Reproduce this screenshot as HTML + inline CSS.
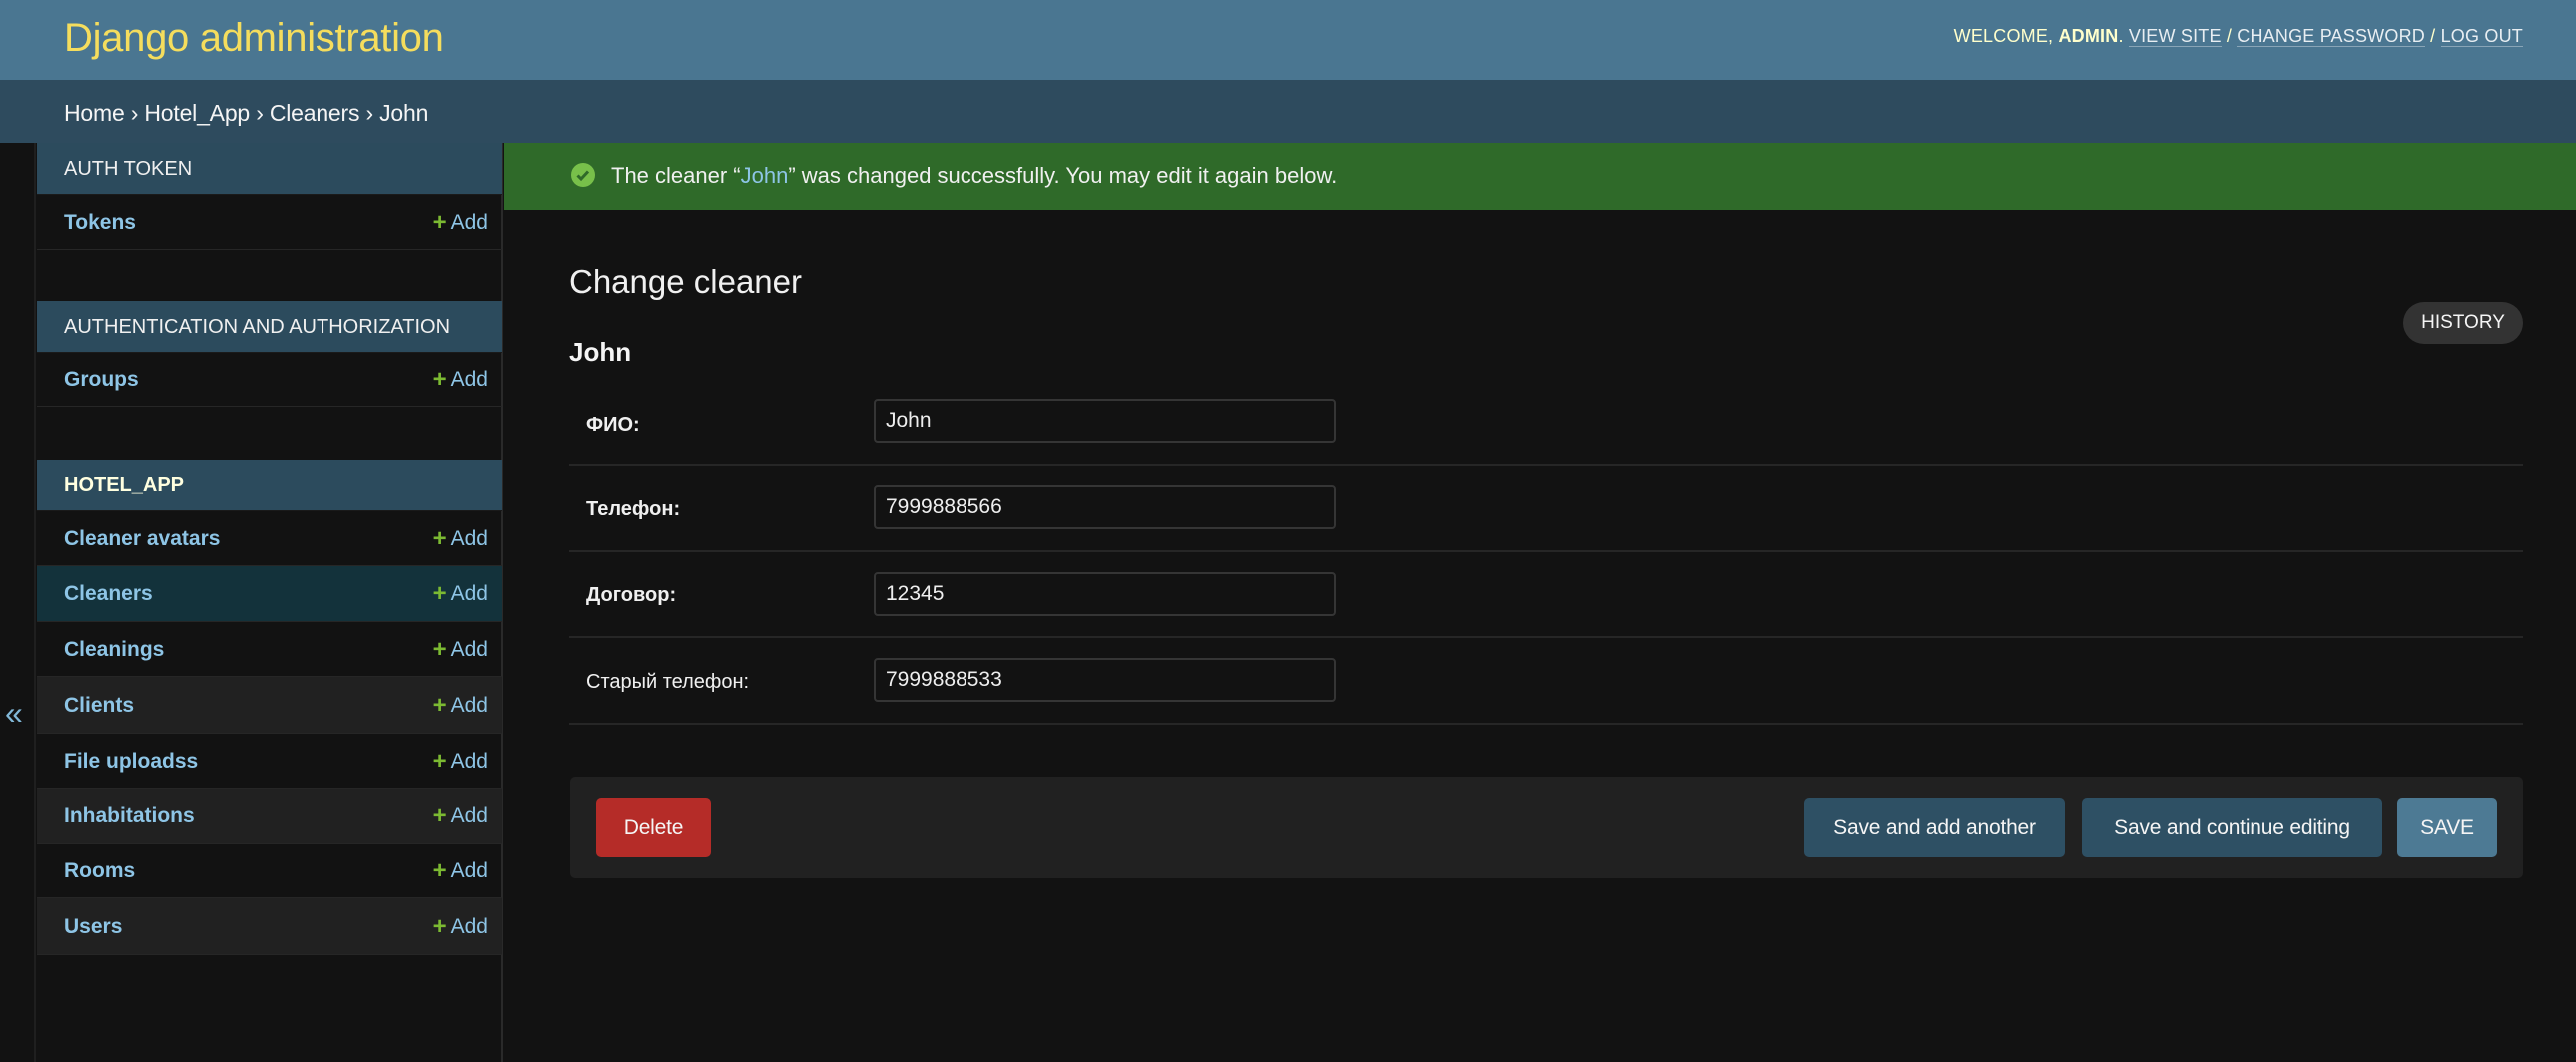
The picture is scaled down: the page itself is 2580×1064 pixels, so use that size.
<!DOCTYPE html>
<html><head><meta charset="utf-8"><style>
*{margin:0;padding:0;box-sizing:border-box}
body{width:2580px;height:1064px;background:#121212;font-family:"Liberation Sans",Arial,sans-serif;color:#eee;position:relative;overflow:hidden}
.a{position:absolute}
#hdr{left:0;top:0;width:2580px;height:80px;background:#4a7691}
#hdr h1{position:absolute;left:64px;top:16px;font-size:40px;color:#f5dd5d;font-weight:normal;letter-spacing:-0.3px}
#tools{right:53px;top:26px;font-size:18px;color:#ffc;text-transform:uppercase;letter-spacing:0.2px}
#tools u{text-decoration:none;border-bottom:1px solid rgba(255,255,255,.35);color:#e8eef2}
#bc{left:0;top:80px;width:2580px;height:63px;background:#2e4b5e;font-size:23px;color:#f5f5f5;padding:20px 0 0 64px;letter-spacing:-0.2px}
#strip{left:0;top:143px;width:36px;height:921px;background:#121212;border-right:2px solid #1f1f1f}
#tog{left:5px;top:696px;font-size:32px;color:#81b8d8}
#side{left:37px;top:143px;width:467px;height:921px;border-right:2px solid #2a2a2a;background:#121212}
.cap{position:absolute;left:0;width:466px;background:#2c4b5d;color:#f0f0f0;font-size:20px;padding-left:27px;border-bottom:1px solid #1a1a1a}
.row{position:absolute;left:0;width:466px;font-size:21px;font-weight:bold;color:#8ec5e6;padding-left:27px;border-bottom:1px solid #262626}
.row .add{position:absolute;right:14px;top:0;font-weight:normal;color:#8ec5e6}
.row .add b{color:#7cba32;font-size:24px;margin-right:4px;font-weight:bold;vertical-align:top}
.alt{background:#212121}
.sel{background:#13323b}
#msg{left:505px;top:143px;width:2075px;height:67px;background:#2f6a29;font-size:22px;color:#f0f0f0;padding:20px 0 0 107px}
#msg .ic{position:absolute;left:67px;top:20px;width:24px;height:24px;border-radius:50%;background:#78c04a}
h2{position:absolute;left:570px;top:264px;font-size:33px;font-weight:normal;color:#f0f0f0}
h3{position:absolute;left:570px;top:338px;font-size:26px;font-weight:bold;color:#f5f5f5}
#hist{left:2407px;top:303px;width:120px;height:42px;border-radius:21px;background:#333;color:#f5f5f5;font-size:19px;text-align:center;line-height:42px}
.fr{position:absolute;left:570px;width:1957px;height:86px;border-bottom:2px solid #262626}
.fr label{position:absolute;left:17px;top:32px;font-size:20px;color:#f0f0f0}
.fr .in{position:absolute;left:305px;top:0;width:463px;height:44px;border:2px solid #353535;border-radius:4px;background:#121212;font-size:21px;color:#eee;padding:8px 0 0 10px}
#sub{left:571px;top:778px;width:1956px;height:102px;background:#212121;border-radius:5px}
.btn{position:absolute;top:22px;height:59px;border-radius:5px;color:#f5f5f5;font-size:21px;text-align:center;line-height:59px;letter-spacing:-0.2px}
</style></head><body>
<div id="hdr" class="a"><h1>Django administration</h1>
<div id="tools" class="a">Welcome, <b>admin</b>. <u>View site</u> / <u>Change password</u> / <u>Log out</u></div></div>
<div id="bc" class="a">Home › Hotel_App › Cleaners › John</div>
<div id="strip" class="a"></div>
<div id="tog" class="a">«</div>
<div id="side" class="a">
<div class="cap" style="top:0;height:52px;line-height:52px">AUTH TOKEN</div>
<div class="row" style="top:52px;height:55px;line-height:55px">Tokens<span class="add"><b>+</b>Add</span></div>
<div class="cap" style="top:159px;height:52px;line-height:52px">AUTHENTICATION AND AUTHORIZATION</div>
<div class="row" style="top:211px;height:54px;line-height:54px">Groups<span class="add"><b>+</b>Add</span></div>
<div class="cap" style="top:318px;height:51px;line-height:51px;font-weight:bold;color:#ffffe0">HOTEL_APP</div>
<div class="row" style="top:369px;height:55px;line-height:55px">Cleaner avatars<span class="add"><b>+</b>Add</span></div>
<div class="row sel" style="top:424px;height:56px;line-height:56px">Cleaners<span class="add"><b>+</b>Add</span></div>
<div class="row" style="top:480px;height:55px;line-height:55px">Cleanings<span class="add"><b>+</b>Add</span></div>
<div class="row alt" style="top:535px;height:57px;line-height:57px">Clients<span class="add"><b>+</b>Add</span></div>
<div class="row" style="top:592px;height:55px;line-height:55px">File uploadss<span class="add"><b>+</b>Add</span></div>
<div class="row alt" style="top:647px;height:56px;line-height:56px">Inhabitations<span class="add"><b>+</b>Add</span></div>
<div class="row" style="top:703px;height:54px;line-height:54px">Rooms<span class="add"><b>+</b>Add</span></div>
<div class="row alt" style="top:757px;height:57px;line-height:57px">Users<span class="add"><b>+</b>Add</span></div>
</div>
<div id="msg" class="a"><span class="ic"><svg width="24" height="24" viewBox="0 0 24 24"><path d="M6.5 12.5l3.5 3.5 7-7.5" stroke="#2f6a29" stroke-width="3" fill="none"/></svg></span>The cleaner “<span style="color:#8ec5e6">John</span>” was changed successfully. You may edit it again below.</div>
<h2>Change cleaner</h2>
<h3>John</h3>
<div id="hist" class="a">HISTORY</div>
<div class="fr" style="top:381px"><label style="font-weight:bold;top:34px">ФИО:</label><div class="in" style="top:19px">John</div></div>
<div class="fr" style="top:467px"><label style="font-weight:bold">Телефон:</label><div class="in" style="top:19px">7999888566</div></div>
<div class="fr" style="top:553px"><label style="font-weight:bold">Договор:</label><div class="in" style="top:20px">12345</div></div>
<div class="fr" style="top:640px"><label>Старый телефон:</label><div class="in" style="top:19px">7999888533</div></div>
<div id="sub" class="a">
<div class="btn" style="left:26px;width:115px;background:#b52c28">Delete</div>
<div class="btn" style="left:1236px;width:261px;background:#2e5064">Save and add another</div>
<div class="btn" style="left:1514px;width:301px;background:#2e5064">Save and continue editing</div>
<div class="btn" style="left:1830px;width:100px;background:#4d7a94">SAVE</div>
</div>
</body></html>
